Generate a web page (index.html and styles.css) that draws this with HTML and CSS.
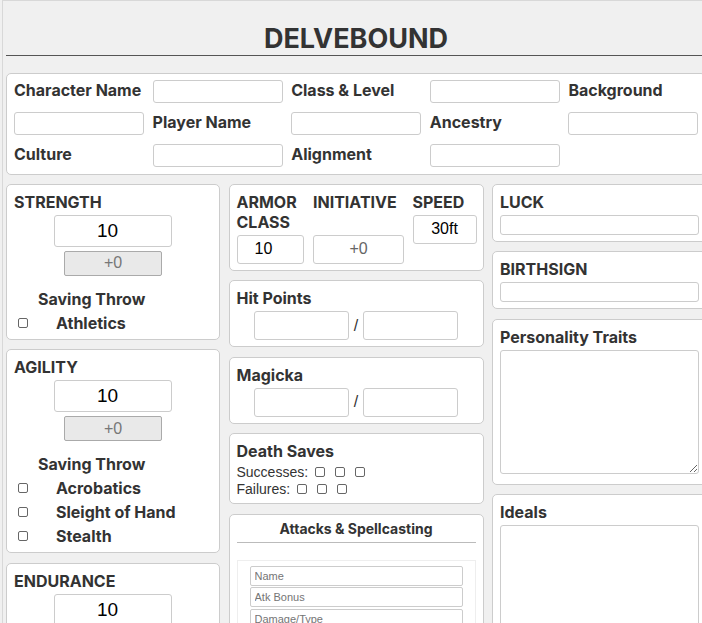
FILE: index.html
```html
<!DOCTYPE html>
<html lang="en">
<head>
<meta charset="utf-8">
<title>Delvebound</title>
<link rel="stylesheet" href="styles.css">
</head>
<body>
<div class="sheet">
  <h1 class="title">DELVEBOUND</h1>

  <section class="card info">
    <div class="info-grid">
      <label class="info-label">Character Name</label><input class="info-input" type="text">
      <label class="info-label">Class &amp; Level</label><input class="info-input" type="text">
      <label class="info-label">Background</label><input class="info-input" type="text">
      <label class="info-label">Player Name</label><input class="info-input" type="text">
      <label class="info-label">Ancestry</label><input class="info-input" type="text">
      <label class="info-label">Culture</label><input class="info-input" type="text">
      <label class="info-label">Alignment</label><input class="info-input" type="text">
    </div>
  </section>

  <div class="main">
    <div class="col">
      <section class="card ability">
        <h3 class="card-title caps">STRENGTH</h3>
        <input class="score" type="text" value="10">
        <div class="mod">+0</div>
        <ul class="skills">
          <li class="save">Saving Throw</li>
          <li><input class="check" type="checkbox"><span class="skill-name">Athletics</span></li>
        </ul>
      </section>
      <section class="card ability">
        <h3 class="card-title caps">AGILITY</h3>
        <input class="score" type="text" value="10">
        <div class="mod">+0</div>
        <ul class="skills">
          <li class="save">Saving Throw</li>
          <li><input class="check" type="checkbox"><span class="skill-name">Acrobatics</span></li>
          <li><input class="check" type="checkbox"><span class="skill-name">Sleight of Hand</span></li>
          <li><input class="check" type="checkbox"><span class="skill-name">Stealth</span></li>
        </ul>
      </section>
      <section class="card ability">
        <h3 class="card-title caps">ENDURANCE</h3>
        <input class="score" type="text" value="10">
        <div class="mod">+0</div>
        <ul class="skills">
          <li class="save">Saving Throw</li>
        </ul>
      </section>
    </div>

    <div class="col">
      <section class="card combat">
        <div class="stat stat-ac">
          <span class="stat-label">ARMOR CLASS</span>
          <input class="stat-input num" type="text" value="10">
        </div>
        <div class="stat stat-init">
          <span class="stat-label">INITIATIVE</span>
          <input class="stat-input muted" type="text" value="+0" readonly>
        </div>
        <div class="stat stat-speed">
          <span class="stat-label">SPEED</span>
          <input class="stat-input" type="text" value="30ft">
        </div>
      </section>
      <section class="card">
        <h3 class="card-title">Hit Points</h3>
        <div class="pool">
          <input class="pool-input" type="text">
          <span class="slash">/</span>
          <input class="pool-input" type="text">
        </div>
      </section>
      <section class="card">
        <h3 class="card-title">Magicka</h3>
        <div class="pool">
          <input class="pool-input" type="text">
          <span class="slash">/</span>
          <input class="pool-input" type="text">
        </div>
      </section>
      <section class="card death">
        <h3 class="card-title">Death Saves</h3>
        <div class="ds-row">Successes:<input class="check ds-check" type="checkbox"><input class="check ds-check" type="checkbox"><input class="check ds-check" type="checkbox"></div>
        <div class="ds-row">Failures:<input class="check ds-check" type="checkbox"><input class="check ds-check" type="checkbox"><input class="check ds-check" type="checkbox"></div>
      </section>
      <section class="card attacks">
        <h3 class="attacks-title">Attacks &amp; Spellcasting</h3>
        <div class="attack-entry">
          <input class="attack-input" type="text" placeholder="Name">
          <input class="attack-input" type="text" placeholder="Atk Bonus">
          <input class="attack-input" type="text" placeholder="Damage/Type">
        </div>
      </section>
    </div>

    <div class="col">
      <section class="card">
        <h3 class="card-title caps">LUCK</h3>
        <input class="line-input" type="text">
      </section>
      <section class="card">
        <h3 class="card-title caps">BIRTHSIGN</h3>
        <input class="line-input" type="text">
      </section>
      <section class="card">
        <h3 class="card-title">Personality Traits</h3>
        <textarea class="notes"></textarea>
      </section>
      <section class="card">
        <h3 class="card-title">Ideals</h3>
        <textarea class="notes"></textarea>
      </section>
    </div>
  </div>
</div>
</body>
</html>
```

FILE: styles.css
```css
html, body {
  margin: 0;
  height: 100%;
  overflow: hidden;
}

body {
  background: #f0f0f0;
  font-family: Inter, "Liberation Sans", sans-serif;
  color: #333;
}

input, textarea {
  box-sizing: border-box;
  font-family: "Liberation Sans", Arial, sans-serif;
  color: #000;
  background: #fff;
  border: 1px solid #ccc;
  border-radius: 3px;
  outline: none;
}

.sheet {
  margin-left: 2px;
  width: 700px;
  padding: 0 3px;
  border-top: 1px solid #d8d8d8;
  border-left: 1px solid #d8d8d8;
}

.title {
  margin: 0 0 17px;
  padding-top: 22px;
  font-size: 27px;
  line-height: 32px;
  font-weight: 700;
  text-align: center;
  color: #333;
  border-bottom: 1px solid #555;
}

.card {
  box-sizing: border-box;
  background: #fff;
  border: 1px solid #ccc;
  border-radius: 5px;
  padding: 7px 7px 6px;
}

.info {
  padding: 6px 7px 7px;
}

.info-grid {
  display: grid;
  grid-template-columns: repeat(5, 130px);
  column-gap: 8.6px;
  row-gap: 9px;
  align-items: start;
}

.info-label {
  font-size: 16px;
  font-weight: 700;
  line-height: 20px;
}

.info-input {
  width: 130px;
  height: 23px;
}

.main {
  display: grid;
  grid-template-columns: 214px 255px 215px;
  column-gap: 8.5px;
  margin-top: 8.5px;
  align-items: start;
}

.col {
  display: flex;
  flex-direction: column;
  gap: 9.5px;
}

.card-title {
  margin: 0 0 3px;
  font-size: 16px;
  line-height: 20px;
  font-weight: 700;
}

/* abilities */
.ability {
  padding-bottom: 4px;
}

.score {
  display: block;
  margin: 0 auto;
  width: 118px;
  height: 32px;
  padding: 0 11px 0 0;
  font-size: 19px;
  text-align: center;
}

.mod {
  box-sizing: border-box;
  width: 98px;
  height: 25px;
  margin: 4px auto 0;
  display: flex;
  align-items: center;
  justify-content: center;
  background: #e9e9e9;
  border: 1px solid #aaa;
  border-radius: 2px;
  font-family: "Liberation Sans", Arial, sans-serif;
  font-size: 16px;
  color: #777;
}

.skills {
  list-style: none;
  margin: 11px 0 0;
  padding: 0;
}

.skills li {
  height: 24px;
  display: flex;
  align-items: center;
  font-size: 16px;
  font-weight: 700;
}

.skills .save {
  padding-left: 24px;
}

.check {
  appearance: none;
  -webkit-appearance: none;
  box-sizing: border-box;
  width: 10px;
  height: 10px;
  margin: 0 0 0 4px;
  border: 1px solid #666;
  border-radius: 2px;
  background: #fff;
  flex: none;
}

.skill-name {
  margin-left: 28px;
}

/* combat */
.combat {
  display: grid;
  grid-template-columns: 68px 91px 64px;
  column-gap: 8.5px;
}

.stat {
  display: flex;
  flex-direction: column;
  justify-content: space-between;
}

.stat-speed {
  justify-content: flex-start;
}

.stat-label {
  font-size: 16px;
  line-height: 20px;
  font-weight: 700;
  margin-bottom: 3px;
}

.stat-input {
  width: 100%;
  height: 29px;
  font-size: 16px;
  text-align: center;
  padding: 0;
}

.stat-ac .stat-input {
  width: 67px;
  padding-right: 13px;
}

.stat-input.muted {
  color: #666;
}

.pool {
  display: flex;
  justify-content: center;
  align-items: center;
  gap: 5px;
}

.pool-input {
  width: 95px;
  height: 29px;
}

.slash {
  font-family: "Liberation Sans", Arial, sans-serif;
  font-size: 16px;
  color: #333;
}

/* death saves */
.death .card-title {
  margin-bottom: 2px;
}

.ds-row {
  display: flex;
  align-items: center;
  height: 17px;
  font-family: "Liberation Sans", Arial, sans-serif;
  font-size: 14px;
  color: #333;
}

.ds-check {
  margin: 0 3px 0 7px;
}

/* attacks */
.attacks-title {
  margin: 0 0 17px;
  padding-bottom: 6px;
  font-size: 14px;
  line-height: 14px;
  font-weight: 700;
  text-align: center;
  border-bottom: 1px solid #bbb;
}

.attack-entry {
  border: 1px solid #eee;
  padding: 5px 12px;
}

.attack-input {
  display: block;
  width: 100%;
  height: 20px;
  margin-bottom: 1.5px;
  padding: 0 4px;
  font-size: 11px;
  border-radius: 2px;
}

.attack-input::placeholder {
  color: #757575;
}

/* right column */
.line-input {
  display: block;
  width: 100%;
  height: 20px;
}

.notes {
  display: block;
  width: 100%;
  height: 124px;
  margin-bottom: 4px;
  padding: 2px;
}
```
